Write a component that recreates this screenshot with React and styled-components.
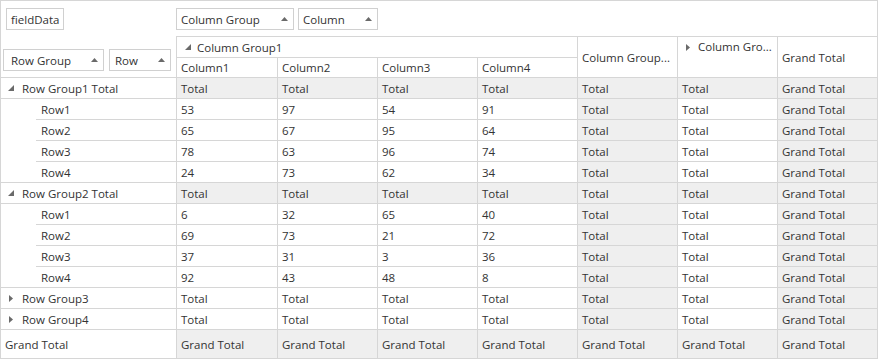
import React from "react";
import styled, { createGlobalStyle } from "styled-components";

const GlobalStyle = createGlobalStyle`
  html, body {
    margin: 0;
    padding: 0;
    background: #fff;
  }
  body {
    font-family: "Open Sans", "Liberation Sans", sans-serif;
  }
`;

const LINE = "#d6d6d6";
const SHADE = "#efefef";

const Pivot = styled.div`
  box-sizing: border-box;
  width: 878px;
  height: 359px;
  border: 1px solid ${LINE};
  display: grid;
  grid-template-columns: 176px 101px repeat(5, 100px) 99px;
  grid-template-rows: 36px 21px 20px repeat(12, 21px) 28px;
  font-size: 11.5px;
  color: #333;
  background: #fff;
`;

const Cell = styled.div`
  box-sizing: border-box;
  display: flex;
  align-items: center;
  padding: 0 4px;
  white-space: nowrap;
  overflow: hidden;
  border-right: ${(p) => (p.$last ? "none" : `1px solid ${LINE}`)};
  border-bottom: ${(p) => (p.$noBottom ? "none" : `1px solid ${LINE}`)};
  background: ${(p) => (p.$shaded ? SHADE : "#fff")};
  grid-column: ${(p) => (p.$colSpan ? `span ${p.$colSpan}` : "auto")};
  grid-row: ${(p) => (p.$rowSpan ? `span ${p.$rowSpan}` : "auto")};
`;

const FieldArea = styled.div`
  display: flex;
  align-items: flex-start;
  padding: 7px 0 0 5px;
`;

const ColumnFieldArea = styled.div`
  grid-column: span 7;
  display: flex;
  align-items: flex-start;
  gap: 4px;
  padding-top: 7px;
  margin-left: -1px;
  border-bottom: 1px solid ${LINE};
`;

const RowFieldArea = styled.div`
  grid-row: span 2;
  display: flex;
  align-items: flex-end;
  gap: 5px;
  padding: 0 0 6px 2px;
  border-right: 1px solid ${LINE};
  border-bottom: 1px solid ${LINE};
`;

const FieldButton = styled.div`
  box-sizing: border-box;
  width: ${(p) => p.$width}px;
  height: 22px;
  border: 1px solid #d0d0d0;
  background: #fff;
  display: flex;
  align-items: center;
  justify-content: space-between;
  padding: 0 5px 0 ${(p) => p.$indent || 4}px;
  white-space: nowrap;
`;

const HeaderTop = styled(Cell)`
  align-items: flex-start;
  padding-top: 1px;
  line-height: 18px;
`;

const Toggle = styled.span`
  display: inline-flex;
  align-items: center;
  gap: ${(p) => p.$gap || 7}px;
  padding-left: ${(p) => p.$pad || 0}px;
`;

const GroupLabel = styled(Cell)`
  padding-left: ${(p) => (p.$expanded ? 7 : 8)}px;
`;

const DetailLabel = styled.div`
  box-sizing: border-box;
  display: flex;
  border-right: 1px solid ${LINE};
  border-bottom: ${(p) => (p.$end ? `1px solid ${LINE}` : "none")};
  background: #fff;
`;

const DetailInner = styled.div`
  flex: 1;
  margin-left: 35px;
  padding-left: 5px;
  display: flex;
  align-items: center;
  border-bottom: ${(p) => (p.$end ? "none" : `1px solid ${LINE}`)};
`;

const SortArrow = () => (
  <svg width="7" height="4" viewBox="0 0 7 4">
    <polygon points="0,4 3.5,0 7,4" fill="#6a6a6a" />
  </svg>
);

const Expanded = () => (
  <svg width="6" height="6" viewBox="0 0 6 6">
    <polygon points="6,0 6,6 0,6" fill="#6a6a6a" />
  </svg>
);

const Collapsed = () => (
  <svg width="4" height="7" viewBox="0 0 4 7">
    <polygon points="0,0 4,3.5 0,7" fill="#6a6a6a" />
  </svg>
);

const groups = [
  {
    name: "Row Group1",
    rows: [
      [53, 97, 54, 91],
      [65, 67, 95, 64],
      [78, 63, 96, 74],
      [24, 73, 62, 34],
    ],
  },
  {
    name: "Row Group2",
    rows: [
      [6, 32, 65, 40],
      [69, 73, 21, 72],
      [37, 31, 3, 36],
      [92, 43, 48, 8],
    ],
  },
];

const TotalsRow = ({ label, expanded }) => (
  <>
    <GroupLabel $expanded={expanded}>
      <Toggle $gap={expanded ? 8 : 9}>
        {expanded ? <Expanded /> : <Collapsed />}
        {label}
      </Toggle>
    </GroupLabel>
    {[0, 1, 2, 3].map((i) => (
      <Cell key={i} $shaded={expanded}>Total</Cell>
    ))}
    <Cell $shaded>Total</Cell>
    <Cell $shaded={expanded}>Total</Cell>
    <Cell $shaded $last>Grand Total</Cell>
  </>
);

const DetailRow = ({ index, values, end }) => (
  <>
    <DetailLabel $end={end}>
      <DetailInner $end={end}>Row{index + 1}</DetailInner>
    </DetailLabel>
    {values.map((v, i) => (
      <Cell key={i}>{v}</Cell>
    ))}
    <Cell $shaded>Total</Cell>
    <Cell>Total</Cell>
    <Cell $shaded $last>Grand Total</Cell>
  </>
);

export default function App() {
  return (
    <>
      <GlobalStyle />
      <Pivot>
        <FieldArea>
          <FieldButton $width={58}>fieldData</FieldButton>
        </FieldArea>
        <ColumnFieldArea>
          <FieldButton $width={118}>
            Column Group <SortArrow />
          </FieldButton>
          <FieldButton $width={80}>
            Column <SortArrow />
          </FieldButton>
        </ColumnFieldArea>

        <RowFieldArea>
          <FieldButton $width={101} $indent={7}>
            Row Group <SortArrow />
          </FieldButton>
          <FieldButton $width={62} $indent={5}>
            Row <SortArrow />
          </FieldButton>
        </RowFieldArea>
        <Cell $colSpan={4}>
          <Toggle $pad={4} $gap={6}>
            <Expanded />
            Column Group1
          </Toggle>
        </Cell>
        <Cell $rowSpan={2}>Column Group...</Cell>
        <HeaderTop $rowSpan={2}>
          <Toggle $pad={4} $gap={8}>
            <Collapsed />
            Column Gro...
          </Toggle>
        </HeaderTop>
        <Cell $rowSpan={2} $last>Grand Total</Cell>
        <Cell>Column1</Cell>
        <Cell>Column2</Cell>
        <Cell>Column3</Cell>
        <Cell>Column4</Cell>

        {groups.map((g) => (
          <React.Fragment key={g.name}>
            <TotalsRow label={`${g.name} Total`} expanded />
            {g.rows.map((r, i) => (
              <DetailRow key={i} index={i} values={r} end={i === g.rows.length - 1} />
            ))}
          </React.Fragment>
        ))}
        <TotalsRow label="Row Group3" />
        <TotalsRow label="Row Group4" />

        <Cell $noBottom>Grand Total</Cell>
        {[0, 1, 2, 3, 4, 5].map((i) => (
          <Cell key={i} $shaded $noBottom>Grand Total</Cell>
        ))}
        <Cell $shaded $noBottom $last>Grand Total</Cell>
      </Pivot>
    </>
  );
}
